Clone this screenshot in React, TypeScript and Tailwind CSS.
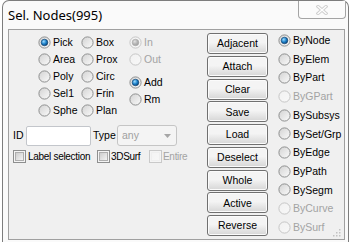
import { useId } from "react";

function Radio({ checked = false, disabled = false }: { checked?: boolean; disabled?: boolean }) {
  const id = useId().replace(/:/g, "");
  return (
    <svg width="13" height="13" viewBox="0 0 13 13" className="shrink-0 block">
      <defs>
        <linearGradient id={`f${id}`} x1="0" y1="0" x2="1" y2="1">
          <stop offset="0" stopColor={disabled ? "#f1f1f1" : "#d2d2d2"} />
          <stop offset="1" stopColor={disabled ? "#f8f8f8" : "#fbfbfb"} />
        </linearGradient>
        <radialGradient id={`d${id}`} cx="0.38" cy="0.35" r="0.7">
          <stop offset="0" stopColor={disabled ? "#e2e2e2" : "#9fdcff"} />
          <stop offset="0.55" stopColor={disabled ? "#b4b4b4" : "#1a7fc8"} />
          <stop offset="1" stopColor={disabled ? "#9c9c9c" : "#0b3f73"} />
        </radialGradient>
      </defs>
      <circle cx="6.5" cy="6.5" r="5.6" fill={`url(#f${id})`} stroke={disabled ? "#c6c6c6" : "#8e8f8f"} strokeWidth="1" />
      {checked && <circle cx="6.5" cy="6.5" r="3.3" fill={`url(#d${id})`} stroke={disabled ? "#a8a8a8" : "#0d3c6a"} strokeWidth="0.6" />}
    </svg>
  );
}

function Check({ disabled = false }: { disabled?: boolean }) {
  const id = useId().replace(/:/g, "");
  return (
    <svg width="13" height="13" viewBox="0 0 13 13" className="shrink-0 block">
      <defs>
        <linearGradient id={`c${id}`} x1="0" y1="0" x2="1" y2="1">
          <stop offset="0" stopColor={disabled ? "#f4f4f4" : "#cbcbcb"} />
          <stop offset="1" stopColor={disabled ? "#f7f7f7" : "#f6f6f6"} />
        </linearGradient>
      </defs>
      <rect x="0.5" y="0.5" width="12" height="12" fill="#f4f4f4" stroke={disabled ? "#c9c9c9" : "#8e8f8f"} />
      <rect x="2.5" y="2.5" width="8" height="8" fill={`url(#c${id})`} stroke={disabled ? "#efefef" : "#aeaeae"} />
    </svg>
  );
}

function RRow({ label, checked, disabled, h = "h-[17px]" }: { label: string; checked?: boolean; disabled?: boolean; h?: string }) {
  return (
    <div className={`flex items-center whitespace-nowrap ${h}`}>
      <Radio checked={checked} disabled={disabled} />
      <span className={`ml-[2px] text-[10.5px] leading-none ${disabled ? "text-[#a3a3a3]" : "text-black"}`}>{label}</span>
    </div>
  );
}

function Btn({ label }: { label: string }) {
  return (
    <div className="h-[21px] w-[61px] rounded-[3px] border border-[#707070] bg-linear-to-b from-[#f4f4f4] from-45% to-[#d6d6d6] flex items-center justify-center text-[10.5px] leading-none text-black shadow-[inset_0_0_0_1px_#fbfbfb]">
      {label}
    </div>
  );
}

export default function App() {
  const right: [string, boolean, boolean][] = [
    ["ByNode", true, false],
    ["ByElem", false, false],
    ["ByPart", false, false],
    ["ByGPart", false, true],
    ["BySubsys", false, false],
    ["BySet/Grp", false, false],
    ["ByEdge", false, false],
    ["ByPath", false, false],
    ["BySegm", false, false],
    ["ByCurve", false, true],
    ["BySurf", false, true],
  ];
  const buttons = ["Adjacent", "Attach", "Clear", "Save", "Load", "Deselect", "Whole", "Active", "Reverse"];
  return (
    <div className="w-[351px] h-[245px] bg-white overflow-hidden font-['Liberation_Sans',Arial,sans-serif]">
      <div className="ml-[2px] w-[347px] h-[242px] border-l border-r border-t border-[#7d7d7d] rounded-t-[7px] bg-[#fafafa]">
        <div className="h-[28px] flex items-start justify-between">
          <div className="pl-[5px] pt-[6px] text-[13px] leading-[16px] text-black font-['Noto_Sans',sans-serif]">Sel. Nodes(995)</div>
          <div className="mr-[2px] w-[48px] h-[18px] border border-t-0 border-[#a4a4a4] rounded-b-[4px] bg-[#fbfbfb] flex items-center justify-center">
            <svg width="12" height="10" viewBox="0 0 12 10">
              <path d="M2 1.5 L10 8.5 M10 1.5 L2 8.5" stroke="#cfcfcf" strokeWidth="3.2" strokeLinecap="square" />
              <path d="M2 1.5 L10 8.5 M10 1.5 L2 8.5" stroke="#ffffff" strokeWidth="1.3" strokeLinecap="square" />
            </svg>
          </div>
        </div>
        <div className="relative ml-[5px] w-[337px] h-[211px] border border-[#a0a0a0] bg-[#f0f0f0] flex">
          {/* left area */}
          <div className="w-[198px] flex flex-col">
            <div className="pl-[29px] pt-[4px] flex">
              <div className="w-[43px] flex flex-col">
                <RRow label="Pick" checked />
                <RRow label="Area" />
                <RRow label="Poly" />
                <RRow label="Sel1" />
                <RRow label="Sphe" />
              </div>
              <div className="w-[48px] flex flex-col">
                <RRow label="Box" />
                <RRow label="Prox" />
                <RRow label="Circ" />
                <RRow label="Frin" />
                <RRow label="Plan" />
              </div>
              <div className="flex flex-col">
                <RRow label="In" checked disabled />
                <RRow label="Out" disabled />
                <div className="mt-[6px]">
                  <RRow label="Add" checked />
                  <RRow label="Rm" />
                </div>
              </div>
            </div>
            <div className="mt-[6px] h-[21px] flex items-center pl-[4px] text-[10.5px] leading-none whitespace-nowrap">
              <span className="w-[13px]">ID</span>
              <div className="w-[65px] h-[20px] bg-white border border-[#c3c6cb] rounded-[2px]" />
              <span className="ml-[2px] w-[24px]">Type</span>
              <div className="w-[60px] h-[21px] border border-[#c5c5c5] rounded-[3px] bg-[#f4f4f4] flex items-center justify-between pl-[4px] pr-[5px] text-[#a0a0a0]">
                <span>any</span>
                <svg width="7" height="4" viewBox="0 0 7 4">
                  <path d="M0 0 H7 L3.5 4 Z" fill="#a6a6a6" />
                </svg>
              </div>
            </div>
            <div className="mt-[4px] h-[13px] flex items-center pl-[4px] text-[10px] tracking-[-0.3px] leading-none whitespace-nowrap">
              <div className="w-[84px] flex items-center">
                <Check />
                <span className="ml-[2px]">Label selection</span>
              </div>
              <div className="w-[52px] flex items-center">
                <Check />
                <span className="ml-[1px]">3DSurf</span>
              </div>
              <div className="flex items-center">
                <Check disabled />
                <span className="ml-[1px] text-[#a3a3a3]">Entire</span>
              </div>
            </div>
          </div>
          {/* buttons */}
          <div className="w-[61px] pt-[3px] flex flex-col gap-[1.75px]">
            {buttons.map((b) => (
              <Btn key={b} label={b} />
            ))}
          </div>
          {/* right radios */}
          <div className="ml-[10px] pt-[1px] flex flex-col">
            {right.map(([l, c, d]) => (
              <RRow key={l} label={l} checked={c} disabled={d} h="h-[18.7px]" />
            ))}
          </div>
          <svg className="absolute right-[3px] bottom-[2px]" width="9" height="9" viewBox="0 0 9 9">
            <g fill="#c2c2c2">
              <rect x="7" y="1" width="1.5" height="1.5" />
              <rect x="4" y="4" width="1.5" height="1.5" />
              <rect x="7" y="4" width="1.5" height="1.5" />
              <rect x="1" y="7" width="1.5" height="1.5" />
              <rect x="4" y="7" width="1.5" height="1.5" />
              <rect x="7" y="7" width="1.5" height="1.5" />
            </g>
          </svg>
        </div>
      </div>
    </div>
  );
}
